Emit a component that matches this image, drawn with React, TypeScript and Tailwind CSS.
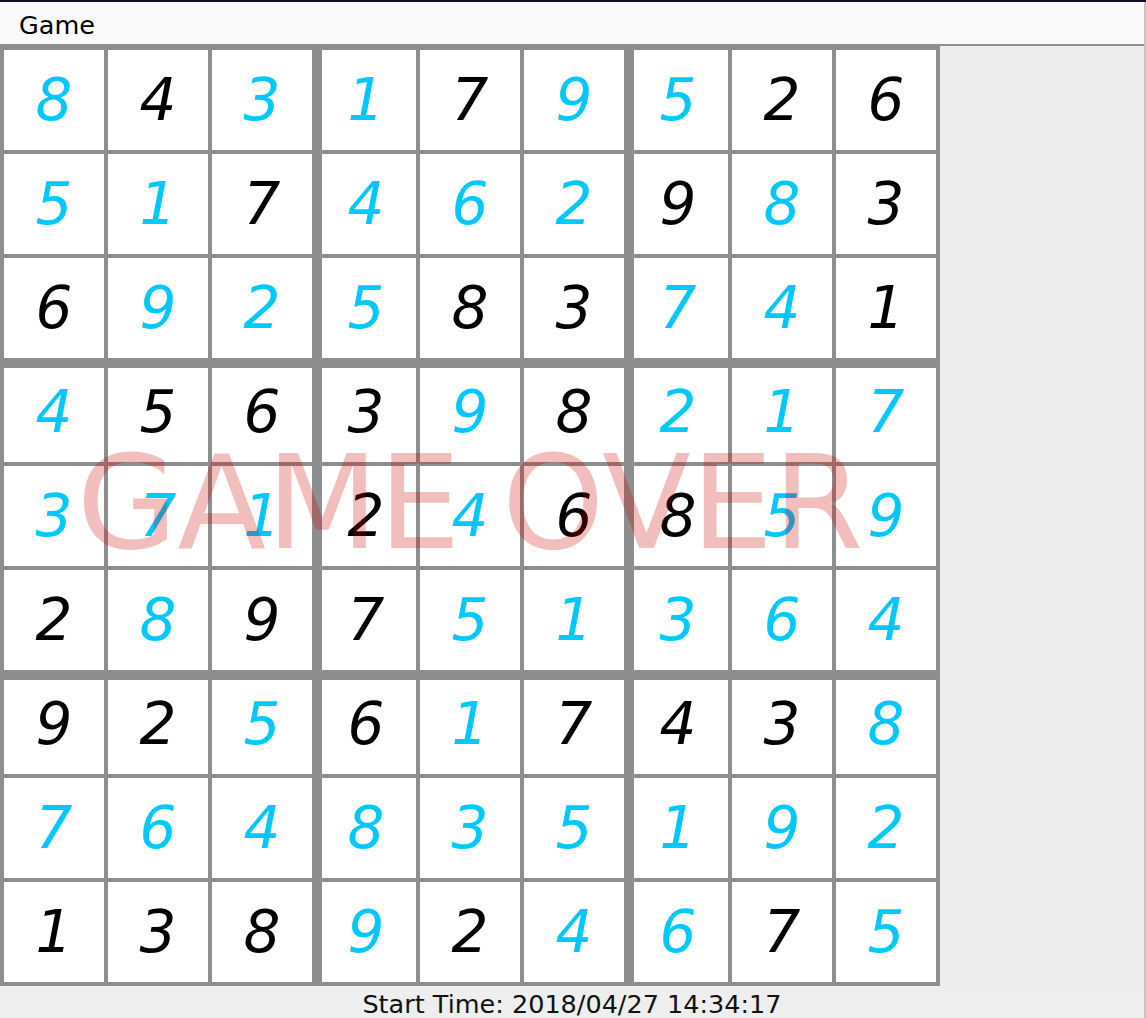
import React from "react";

type Cell = [number, "B" | "K"];

const raw = [
  "8B 4K 3B 1B 7K 9B 5B 2K 6K",
  "5B 1B 7K 4B 6B 2B 9K 8B 3K",
  "6K 9B 2B 5B 8K 3K 7B 4B 1K",
  "4B 5K 6K 3K 9B 8K 2B 1B 7B",
  "3B 7B 1B 2K 4B 6K 8K 5B 9B",
  "2K 8B 9K 7K 5B 1B 3B 6B 4B",
  "9K 2K 5B 6K 1B 7K 4K 3K 8B",
  "7B 6B 4B 8B 3B 5B 1B 9B 2B",
  "1K 3K 8K 9B 2K 4B 6B 7K 5B",
];

const board: Cell[][] = raw.map((r) =>
  r.split(" ").map((t) => [Number(t[0]), t[1] as "B" | "K"])
);

function cellShadow(r: number, c: number): string {
  const left = c === 3 || c === 6;
  const top = r === 3 || r === 6;
  if (left && top) return "shadow-[inset_6px_6px_0_#8e8e8e]";
  if (left) return "shadow-[inset_6px_0_0_#8e8e8e]";
  if (top) return "shadow-[inset_0_6px_0_#8e8e8e]";
  return "";
}

export default function App() {
  return (
    <div
      className="w-[1146px] h-[1018px] flex flex-col bg-[#eeeeee] overflow-hidden"
      style={{ fontFamily: '"DejaVu Sans", "Liberation Sans", sans-serif' }}
    >
      <div className="h-[2px] bg-[#0b1220] shrink-0" />
      <div className="flex flex-1 min-h-0">
        <div className="flex flex-col w-[1144px]">
          <div className="h-[44px] shrink-0 bg-[#f9f9f9] border-b-2 border-[#8f8f8f] pl-[19px] pt-[11px]">
            <span className="text-[25.5px] leading-none text-black">Game</span>
          </div>
          <div className="flex bg-[#ededed]">
            <div className="relative w-[940px] h-[940px] bg-[#8e8e8e] p-[4px]">
              <div className="grid grid-cols-[repeat(9,100px)] grid-rows-[repeat(9,100px)] gap-[4px]">
                {board.map((row, r) =>
                  row.map(([n, col], c) => (
                    <div
                      key={`${r}-${c}`}
                      className={`bg-white flex items-center justify-center ${cellShadow(r, c)}`}
                    >
                      <span
                        className={`italic text-[58px] leading-none ${
                          col === "B" ? "text-[#00c8ff]" : "text-black"
                        }`}
                      >
                        {n}
                      </span>
                    </div>
                  ))
                )}
              </div>
              <div className="absolute left-0 right-0 top-[392px] text-center pointer-events-none">
                <span className="text-[130px] leading-none whitespace-nowrap text-[rgba(200,0,0,0.26)]">
                  GAME OVER
                </span>
              </div>
            </div>
            <div className="flex-1" />
          </div>
          <div className="flex-1 flex justify-center pt-[6px] bg-[#eeeeee]">
            <span className="text-[25.5px] leading-none text-[#111]">
              Start Time: 2018/04/27 14:34:17
            </span>
          </div>
        </div>
        <div className="w-[2px] bg-[#c4c4c4]" />
      </div>
    </div>
  );
}
